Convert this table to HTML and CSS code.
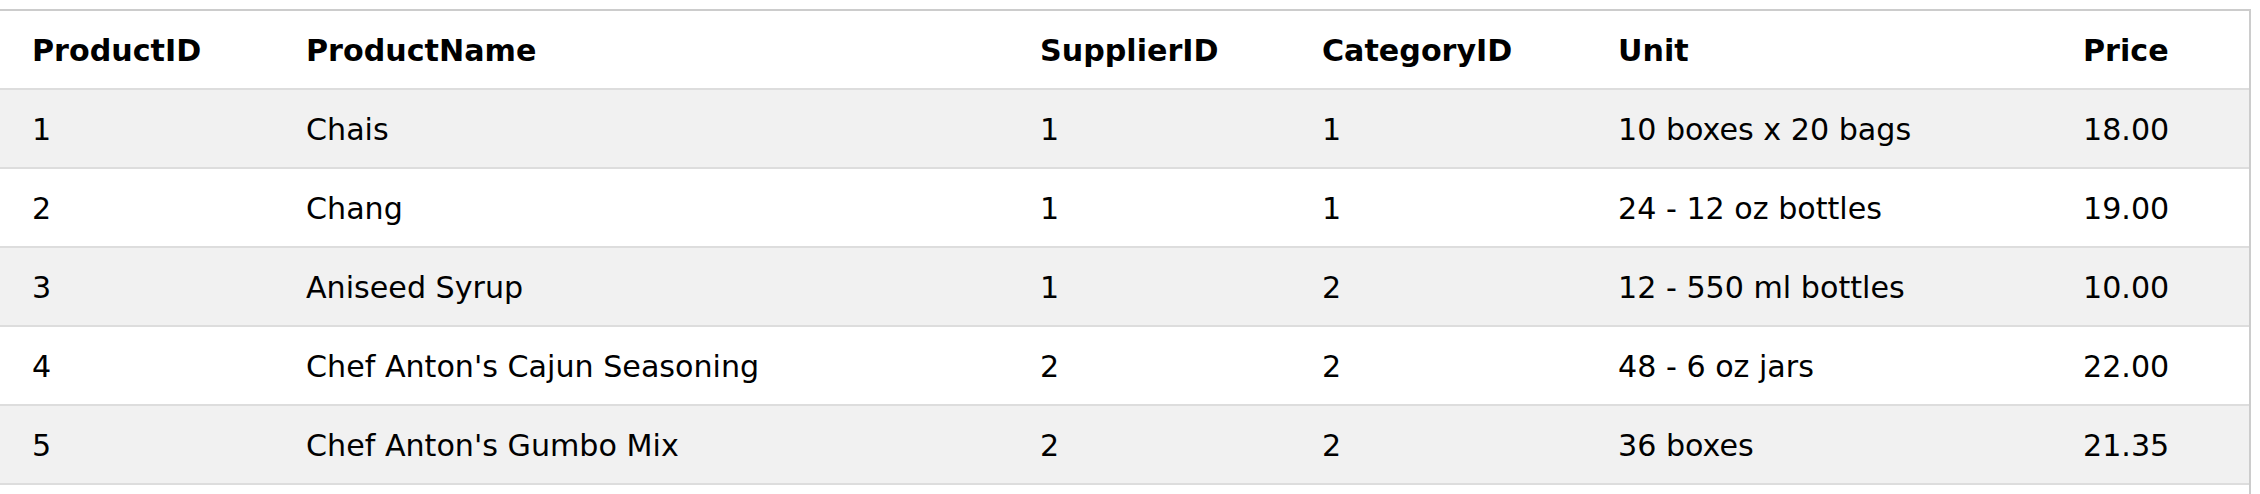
FILE: index.html
```html
<!DOCTYPE html>
<html lang="en">
<head>
<meta charset="utf-8">
<title>Products</title>
<link rel="stylesheet" href="styles.css">
</head>
<body>
<table class="products">
  <colgroup>
    <col class="c-id">
    <col class="c-name">
    <col class="c-sup">
    <col class="c-cat">
    <col class="c-unit">
    <col class="c-price">
  </colgroup>
  <thead>
    <tr>
      <th>ProductID</th>
      <th>ProductName</th>
      <th>SupplierID</th>
      <th>CategoryID</th>
      <th>Unit</th>
      <th>Price</th>
    </tr>
  </thead>
  <tbody>
    <tr>
      <td>1</td><td>Chais</td><td>1</td><td>1</td><td>10 boxes x 20 bags</td><td>18.00</td>
    </tr>
    <tr>
      <td>2</td><td>Chang</td><td>1</td><td>1</td><td>24 - 12 oz bottles</td><td>19.00</td>
    </tr>
    <tr>
      <td>3</td><td>Aniseed Syrup</td><td>1</td><td>2</td><td>12 - 550 ml bottles</td><td>10.00</td>
    </tr>
    <tr>
      <td>4</td><td>Chef Anton's Cajun Seasoning</td><td>2</td><td>2</td><td>48 - 6 oz jars</td><td>22.00</td>
    </tr>
    <tr>
      <td>5</td><td>Chef Anton's Gumbo Mix</td><td>2</td><td>2</td><td>36 boxes</td><td>21.35</td>
    </tr>
    <tr class="tail">
      <td></td><td></td><td></td><td></td><td></td><td></td>
    </tr>
  </tbody>
</table>
</body>
</html>
```

FILE: styles.css
```css
html, body {
  margin: 0;
  padding: 0;
  background: #fff;
  height: 494px;
  overflow: hidden;
}

.products {
  margin: 9px 0 0 -2px;
  border-collapse: separate;
  border-spacing: 0;
  border: 2px solid #ccc;
  border-bottom: 0;
  table-layout: fixed;
  width: 2253px;
  font-family: "DejaVu Sans", Verdana, sans-serif;
  font-size: 30.15px;
  line-height: 45px;
  color: #000;
}

.c-id { width: 290px; }
.c-name { width: 734px; }
.c-sup { width: 282px; }
.c-cat { width: 296px; }
.c-unit { width: 465px; }
.c-price { width: 182px; }

.products th,
.products td {
  padding: 17px 16px 15px 16px;
  text-align: left;
  vertical-align: top;
  border-bottom: 2px solid #ddd;
  white-space: nowrap;
}

.products th:first-child,
.products td:first-child {
  padding-left: 32px;
}

.products th {
  font-weight: bold;
}

.products tbody tr:nth-child(odd) {
  background: #f1f1f1;
}

.products tbody tr:nth-child(even) {
  background: #fff;
}

.products tbody tr.tail td {
  height: 45px;
  border-bottom: 0;
}
```
